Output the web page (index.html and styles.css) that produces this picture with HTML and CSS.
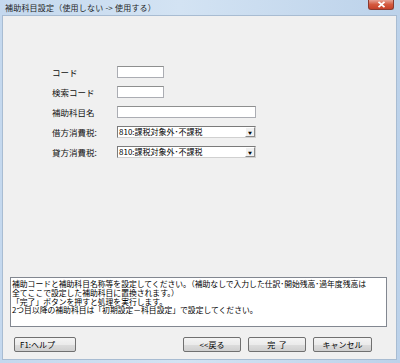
FILE: index.html
```html
<!DOCTYPE html>
<html lang="ja">
<head>
    <meta charset="UTF-8">
    <title>補助科目設定</title>
    <link rel="stylesheet" href="styles.css">
</head>
<body>
    <div class="window">
        <!-- タイトルバー -->
        <div class="titlebar">
            <span class="title">補助科目設定（使用しない -&gt; 使用する）</span>
            <span class="close">
                <svg width="9" height="7" viewBox="0 0 9 7">
                    <path d="M1.5 0.8 L7.5 6.2 M7.5 0.8 L1.5 6.2" stroke="#fff" stroke-width="1.8"/>
                </svg>
            </span>
        </div>

        <div class="client">
            <!-- 入力項目 -->
            <div class="form">
                <label class="lbl">コード</label>
                <div class="field short"></div>

                <label class="lbl">検索コード</label>
                <div class="field short"></div>

                <label class="lbl">補助科目名</label>
                <div class="field long"></div>

                <label class="lbl">借方消費税:</label>
                <div class="combo"><span class="combo-text">810:課税対象外･不課税</span><span class="combo-btn">&#9660;</span></div>

                <label class="lbl">貸方消費税:</label>
                <div class="combo"><span class="combo-text">810:課税対象外･不課税</span><span class="combo-btn">&#9660;</span></div>
            </div>

            <!-- メッセージ -->
            <div class="message">
                <p>補助コードと補助科目名称等を設定してください。（補助なしで入力した仕訳･開始残高･過年度残高は</p>
                <p>全てここで設定した補助科目に置換されます。）</p>
                <p>「完了」ボタンを押すと処理を実行します。</p>
                <p>2つ目以降の補助科目は「初期設定－科目設定」で設定してください。</p>
            </div>

            <!-- ボタン -->
            <div class="buttons">
                <button class="btn help">F1:ヘルプ</button>
                <div class="right">
                    <button class="btn">&lt;&lt;戻る</button>
                    <button class="btn">完&nbsp;&nbsp;了</button>
                    <button class="btn cancel">キャンセル</button>
                </div>
            </div>
        </div>
    </div>
</body>
</html>
```

FILE: styles.css
```css
* {
    padding: 0;
    margin: 0;
    box-sizing: border-box;
}

body {
    font-family: "Noto Sans CJK JP", "Liberation Sans", sans-serif;
    font-size: 8px;
    color: #000;
    background: #fff;
}

.window {
    width: 400px;
    height: 363px;
    display: flex;
    flex-direction: column;
    padding: 0 3px 3px 2px;
    background: linear-gradient(to right, #c4d8ee 0%, #d3e3f3 45%, #bcd2ea 100%);
}

.titlebar {
    height: 15px;
    display: flex;
    justify-content: space-between;
    align-items: flex-start;
    padding-left: 3px;
}

.title {
    line-height: 15px;
    font-size: 8px;
    letter-spacing: 0.2px;
    color: #1e1e1e;
}

.close {
    width: 26px;
    height: 10px;
    margin-right: 3px;
    display: flex;
    justify-content: center;
    align-items: center;
    border: 1px solid #8a3a30;
    border-top: 0;
    border-radius: 0 0 3px 3px;
    background: linear-gradient(to bottom, #e6a295 0%, #d4593f 50%, #c6412a 100%);
}

.client {
    flex: 1;
    display: flex;
    flex-direction: column;
    background: #f0f0f0;
    border: 1px solid #a8bcd2;
}

.form {
    display: grid;
    grid-template-columns: 65px auto;
    grid-auto-rows: 12px;
    row-gap: 8px;
    align-items: center;
    margin: 50px 0 0 49px;
}

.lbl {
    font-size: 8.5px;
    line-height: 12px;
    color: #111;
}

.field {
    height: 12px;
    background: #fff;
    border: 1px solid #abadb3;
    border-top-color: #8e8f8f;
}

.field.short {
    width: 47px;
}

.field.long {
    width: 139px;
}

.combo {
    width: 139px;
    height: 12px;
    display: flex;
    align-items: center;
    justify-content: space-between;
    background: #fff;
    border: 1px solid #7a7a7a;
    border-right-color: #d0d0d0;
    border-bottom-color: #d0d0d0;
}

.combo-text {
    font-size: 8px;
    line-height: 10px;
    padding-left: 1px;
}

.combo-btn {
    width: 10px;
    height: 10px;
    font-size: 4px;
    line-height: 10px;
    text-align: center;
    background: #f0f0f0;
    border: 1px solid #fff;
    border-right-color: #8a8a8a;
    border-bottom-color: #8a8a8a;
}

.message {
    margin: auto 9px 0 7px;
    height: 50px;
    padding: 2px 1px;
    background: #fff;
    border: 1px solid #828790;
    font-size: 7.8px;
    line-height: 8.8px;
    white-space: nowrap;
}

.buttons {
    display: flex;
    justify-content: space-between;
    margin: 10px 24px 7px 11px;
}

.right {
    display: flex;
    gap: 7px;
}

.btn {
    width: 58px;
    height: 15px;
    font-family: "Noto Sans CJK JP", "Liberation Sans", sans-serif;
    font-size: 8px;
    color: #000;
    background: linear-gradient(to bottom, #f4f4f4 0%, #ebebeb 50%, #dddddd 51%, #cfcfcf 100%);
    border: 1px solid #707070;
    border-radius: 2px;
}

.btn.help {
    width: 62px;
    text-align: left;
    padding-left: 5px;
}

.btn.cancel {
    width: 59px;
}
```
